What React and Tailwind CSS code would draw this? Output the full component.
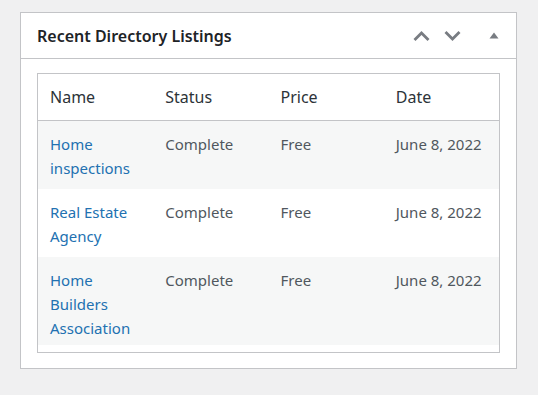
import React from "react";

const rows = [
  { name: ["Home", "inspections"], h: "h-[69px]", bg: "bg-[#f6f7f7]" },
  { name: ["Real Estate", "Agency"], h: "h-[68px]", bg: "bg-white" },
  { name: ["Home", "Builders", "Association"], h: "h-[88px]", bg: "bg-[#f6f7f7]" },
];

export default function App() {
  return (
    <div
      className="min-h-screen bg-[#f0f0f1] pt-[12px] pl-[20px]"
      style={{ fontFamily: '"Segoe UI", "Noto Sans", sans-serif' }}
    >
      <div className="w-[497px] border border-[#c3c4c7] bg-white">
        <div className="flex h-[46px] items-center justify-between border-b border-[#c3c4c7] pl-[16px] pr-[17px]">
          <h2 className="text-[16px] font-semibold leading-none text-[#1d2327]">
            Recent Directory Listings
          </h2>
          <div className="flex items-center">
            <svg width="17" height="10" viewBox="0 0 17 10" className="mr-[14px]">
              <path d="M1.5 9 L8.5 2 L15.5 9" fill="none" stroke="#787c82" strokeWidth="2.8" />
            </svg>
            <svg width="17" height="10" viewBox="0 0 17 10" className="mr-[28px]">
              <path d="M1.5 1 L8.5 8 L15.5 1" fill="none" stroke="#787c82" strokeWidth="2.8" />
            </svg>
            <svg width="10" height="7" viewBox="0 0 10 7">
              <path d="M0.5 6.5 L5 0.5 L9.5 6.5 Z" fill="#787c82" />
            </svg>
          </div>
        </div>
        <div className="px-[16px] pt-[14px] pb-[15px]">
          <div className="border border-[#c3c4c7] pb-[7px]">
            <table className="w-full table-fixed border-collapse text-left">
              <thead>
                <tr className="h-[46px] border-b border-[#c3c4c7]">
                  {["Name", "Status", "Price", "Date"].map((t) => (
                    <th
                      key={t}
                      className="pl-[12px] pt-[1px] align-middle text-[16px] font-normal text-[#2c3338]"
                    >
                      {t}
                    </th>
                  ))}
                </tr>
              </thead>
              <tbody className="text-[15px] leading-[24px]">
                {rows.map((r, i) => (
                  <tr key={i} className={`${r.h} ${r.bg}`}>
                    <td className="pl-[12px] pt-[11px] align-top text-[#2271b1]">
                      {r.name.map((n, j) => (
                        <div key={j}>{n}</div>
                      ))}
                    </td>
                    <td className="pl-[12px] pt-[11px] align-top text-[#50575e]">Complete</td>
                    <td className="pl-[12px] pt-[11px] align-top text-[#50575e]">Free</td>
                    <td className="pl-[12px] pt-[11px] align-top whitespace-nowrap text-[#50575e]">
                      June 8, 2022
                    </td>
                  </tr>
                ))}
              </tbody>
            </table>
          </div>
        </div>
      </div>
    </div>
  );
}
